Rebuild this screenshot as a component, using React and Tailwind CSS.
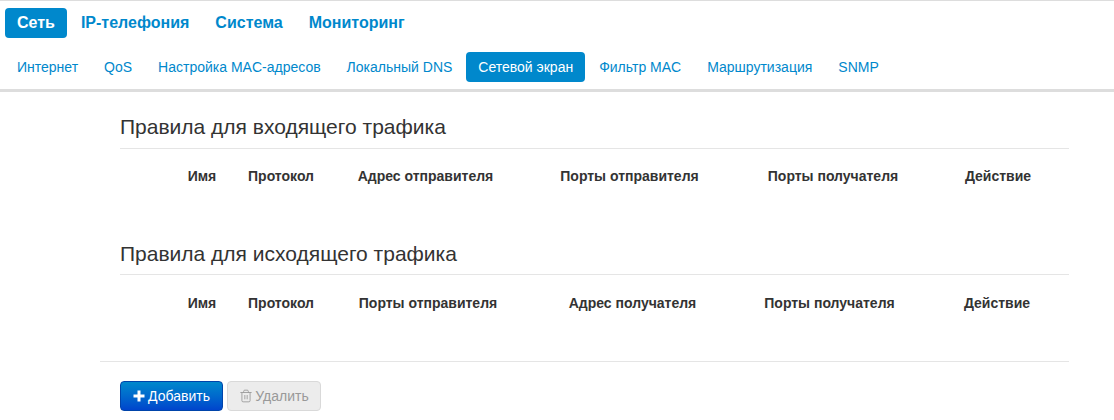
import React from 'react';
import { Trash2 } from 'lucide-react';

const mainTabs = ['Сеть', 'IP-телефония', 'Система', 'Мониторинг'];
const subTabs = ['Интернет', 'QoS', 'Настройка MAC-адресов', 'Локальный DNS', 'Сетевой экран', 'Фильтр MAC', 'Маршрутизация', 'SNMP'];

const RulesTable = ({ title, columns, titleClass, gridClass }) => {
  return (
    <section className="ml-5">
      <h2 className={`border-b border-[#e5e5e5] text-[21px] leading-[30px] text-[#333] ${titleClass}`}>{title}</h2>
      <div className={`grid text-[14px] leading-[20px] font-bold text-[#333] ${gridClass}`}>
        <div />
        {columns.map((col) => (
          <div key={col} className="text-center">{col}</div>
        ))}
      </div>
    </section>
  );
};

export default function App() {
  return (
    <div className="h-[420px] w-[1114px] overflow-hidden bg-white font-['Liberation_Sans',Arial,sans-serif]">
      <div className="border-t border-[#ddd] pt-[7px] pl-[5px]">
        <nav className="flex h-[30px] items-center gap-[2px] text-[16px] font-bold">
          {mainTabs.map((tab, i) => (
            <a
              key={tab}
              className={i === 0
                ? 'flex h-[30px] items-center rounded-[4px] bg-[#0088cc] px-3 text-white'
                : 'flex h-[30px] items-center px-3 text-[#0088cc]'}
            >
              {tab}
            </a>
          ))}
        </nav>
        <nav className="mt-[14px] flex h-[30px] items-center gap-[2px] text-[14px] text-[#0088cc]">
          {subTabs.map((tab) => (
            <a
              key={tab}
              className={tab === 'Сетевой экран'
                ? 'flex h-[30px] items-center rounded-[4px] bg-[#0088cc] px-3 text-white'
                : 'flex h-[30px] items-center px-3'}
            >
              {tab}
            </a>
          ))}
        </nav>
      </div>
      <div className="mt-[7px] h-[3px] bg-[#ddd]" />

      <main className="mt-[20px] mr-[45px] ml-[100px]">
        <RulesTable
          title="Правила для входящего трафика"
          columns={['Имя', 'Протокол', 'Адрес отправителя', 'Порты отправителя', 'Порты получателя', 'Действие']}
          titleClass="h-[37px]"
          gridClass="pt-[17px] grid-cols-[50px_64px_94px_195px_213px_194px_136px]"
        />
        <div className="h-[53px]" />
        <RulesTable
          title="Правила для исходящего трафика"
          columns={['Имя', 'Протокол', 'Порты отправителя', 'Адрес получателя', 'Порты получателя', 'Действие']}
          titleClass="h-[36px]"
          gridClass="pt-[18px] grid-cols-[50px_64px_94px_200px_209px_185px_150px]"
        />
        <div className="mt-[48px] border-t border-[#e5e5e5] pt-[19px] pl-5">
          <div className="flex gap-[4px] text-[14px]">
            <button className="flex h-[30px] w-[103px] items-center justify-center gap-[3px] rounded-[4px] border border-[#0044aa] bg-gradient-to-b from-[#0088cc] to-[#0044cc] text-white">
              <svg viewBox="0 0 12 12" className="h-3 w-3 fill-white">
                <path d="M4.5 0.5h3v4h4v3h-4v4h-3v-4h-4v-3h4z" />
              </svg>
              Добавить
            </button>
            <button className="flex h-[30px] w-[94px] items-center justify-center gap-[2px] rounded-[4px] border border-[#d9d9d9] bg-[#ececec] text-[#999]">
              <Trash2 className="h-[14px] w-[14px]" strokeWidth={1.5} />
              Удалить
            </button>
          </div>
        </div>
      </main>
    </div>
  );
}
